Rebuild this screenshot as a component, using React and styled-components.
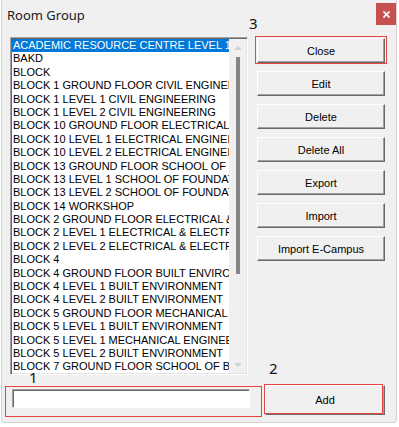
import React, { useState } from 'react';
import styled, { createGlobalStyle } from 'styled-components';

const rooms = [
    'ACADEMIC RESOURCE CENTRE LEVEL 1',
    'BAKD',
    'BLOCK',
    'BLOCK 1 GROUND FLOOR CIVIL ENGINEERING',
    'BLOCK 1 LEVEL 1 CIVIL ENGINEERING',
    'BLOCK 1 LEVEL 2 CIVIL ENGINEERING',
    'BLOCK 10 GROUND FLOOR ELECTRICAL ENGINEERING',
    'BLOCK 10 LEVEL 1 ELECTRICAL ENGINEERING',
    'BLOCK 10 LEVEL 2 ELECTRICAL ENGINEERING',
    'BLOCK 13 GROUND FLOOR SCHOOL OF FOUNDATION',
    'BLOCK 13 LEVEL 1 SCHOOL OF FOUNDATION',
    'BLOCK 13 LEVEL 2 SCHOOL OF FOUNDATION',
    'BLOCK 14 WORKSHOP',
    'BLOCK 2 GROUND FLOOR ELECTRICAL & ELECTRONIC',
    'BLOCK 2 LEVEL 1 ELECTRICAL & ELECTRONIC',
    'BLOCK 2 LEVEL 2 ELECTRICAL & ELECTRONIC',
    'BLOCK 4',
    'BLOCK 4 GROUND FLOOR BUILT ENVIRONMENT',
    'BLOCK 4 LEVEL 1 BUILT ENVIRONMENT',
    'BLOCK 4 LEVEL 2 BUILT ENVIRONMENT',
    'BLOCK 5 GROUND FLOOR MECHANICAL ENGINEERING',
    'BLOCK 5 LEVEL 1 BUILT ENVIRONMENT',
    'BLOCK 5 LEVEL 1 MECHANICAL ENGINEERING',
    'BLOCK 5 LEVEL 2 BUILT ENVIRONMENT',
    'BLOCK 7 GROUND FLOOR SCHOOL OF BUSINESS',
];

const actions = ['Edit', 'Delete', 'Delete All', 'Export', 'Import', 'Import E-Campus'];

function App() {
    const [selected, setSelected] = useState(0);
    const [name, setName] = useState('');

    return (
        <>
            <GlobalStyle />
            <Window>
                <TitleBar>
                    <Title>Room Group</Title>
                    <CloseX aria-label="close">
                        <svg width="7" height="7" viewBox="0 0 7 7">
                            <path d="M0.5 0.5 L6.5 6.5 M6.5 0.5 L0.5 6.5" stroke="#fff" strokeWidth="1.6" />
                        </svg>
                    </CloseX>
                </TitleBar>

                <MainRow>
                    <ListBox>
                        <Rows>
                            {rooms.map((room, i) => (
                                <Row key={room} $active={i === selected} onClick={() => setSelected(i)}>
                                    {room}
                                </Row>
                            ))}
                        </Rows>
                        <ScrollBar>
                            <Arrow $up />
                            <Thumb />
                            <Arrow />
                        </ScrollBar>
                    </ListBox>

                    <ButtonColumn>
                        <Marked $t={-2} $l={-2} $r={-2} $b={-1}>
                            <WinButton>Close</WinButton>
                        </Marked>
                        {actions.map(a => (
                            <WinButton key={a}>{a}</WinButton>
                        ))}
                    </ButtonColumn>
                </MainRow>

                <BottomRow>
                    <Marked $t={-3} $l={-7} $r={-12} $b={-9} className="name-field">
                        <TextBox value={name} onChange={e => setName(e.target.value)} />
                    </Marked>
                    <Marked $t={-1} $l={-1} $r={2} $b={1} className="add-field">
                        <WinButton $tall>Add</WinButton>
                    </Marked>
                </BottomRow>

                <Tag $x={247} $y={13}>3</Tag>
                <Tag $x={27} $y={367}>1</Tag>
                <Tag $x={267} $y={358}>2</Tag>
            </Window>
        </>
    );
}

const GlobalStyle = createGlobalStyle`
    * { box-sizing: border-box; }
    body {
        margin: 0;
        background: #ffffff;
        font-family: "Liberation Sans", Arial, sans-serif;
    }
`;

const Window = styled.div`
    position: relative;
    margin-left: 1px;
    width: 396px;
    height: 423px;
    background: #f0f0f0;
    border: 1px solid #d3d3d3;
    border-top: none;
    border-radius: 0 0 4px 4px;
    display: flex;
    flex-direction: column;
`;

const TitleBar = styled.div`
    height: 37px;
    display: flex;
    align-items: flex-start;
    padding-left: 5px;
`;

const Title = styled.div`
    margin-top: 6px;
    font-family: "Noto Sans", "Open Sans", sans-serif;
    font-size: 13px;
    line-height: 18px;
    color: #1a1a1a;
`;

const CloseX = styled.div`
    margin-left: auto;
    margin-top: 3px;
    width: 20px;
    height: 22px;
    background: #c75050;
    display: flex;
    align-items: center;
    justify-content: center;
`;

const MainRow = styled.div`
    display: flex;
    align-items: flex-start;
    padding-left: 8px;
`;

const ListBox = styled.div`
    width: 238px;
    height: 338px;
    background: #fff;
    border: 1px solid;
    border-color: #a0a0a0 #ffffff #ffffff #a0a0a0;
    box-shadow: inset 1px 1px #696969, inset -1px -1px #e3e3e3;
    padding: 1px;
    display: flex;
`;

const Rows = styled.div`
    flex: 1;
    min-width: 0;
    overflow: hidden;
`;

const Row = styled.div`
    height: 13.4px;
    line-height: 13.4px;
    padding-left: 1px;
    font-size: 11px;
    white-space: nowrap;
    overflow: hidden;
    cursor: default;
    color: ${p => (p.$active ? '#fff' : '#000')};
    background: ${p => (p.$active ? '#0078d7' : 'transparent')};
`;

const ScrollBar = styled.div`
    width: 17px;
    flex: none;
    background: #f0f0f0;
    display: flex;
    flex-direction: column;
    align-items: center;
`;

const Arrow = styled.div`
    width: 0;
    height: 0;
    border-left: 4px solid transparent;
    border-right: 4px solid transparent;
    ${p => (p.$up
        ? 'border-bottom: 4px solid #d0d0d0; margin-top: 7px;'
        : 'border-top: 4px solid #d0d0d0; margin-top: auto; margin-bottom: 6px;')}
`;

const Thumb = styled.div`
    margin-top: 7px;
    width: 4px;
    height: 217px;
    background: #858585;
`;

const ButtonColumn = styled.div`
    margin-left: 9px;
    margin-top: 1px;
    width: 128px;
    display: flex;
    flex-direction: column;
    gap: 8px;
`;

const Marked = styled.div`
    position: relative;
    display: flex;
    &::after {
        content: '';
        position: absolute;
        top: ${p => p.$t}px;
        left: ${p => p.$l}px;
        right: ${p => p.$r}px;
        bottom: ${p => p.$b}px;
        border: 1px solid #e84444;
        pointer-events: none;
    }
    &.name-field {
        margin-top: 4px;
        margin-left: 10px;
    }
    &.add-field {
        margin-left: 15px;
    }
`;

const WinButton = styled.button`
    width: ${p => (p.$tall ? '120px' : '128px')};
    height: ${p => (p.$tall ? '30px' : '25px')};
    padding: 0;
    background: #f0f0f0;
    border: 1px solid;
    border-color: #ffffff #696969 #696969 #ffffff;
    box-shadow: inset -1px -1px #a0a0a0;
    font-family: "Liberation Sans", Arial, sans-serif;
    font-size: 11px;
    color: #000;
    cursor: pointer;
`;

const BottomRow = styled.div`
    display: flex;
    align-items: flex-start;
    margin-top: 10px;
`;

const TextBox = styled.input`
    width: 238px;
    height: 19px;
    background: #fff;
    border: 1px solid;
    border-color: #a0a0a0 #ffffff #ffffff #a0a0a0;
    box-shadow: inset 1px 1px #696969;
    padding: 0 3px;
    font-family: "Liberation Sans", Arial, sans-serif;
    font-size: 11px;
    outline: none;
`;

const Tag = styled.span`
    position: absolute;
    left: ${p => p.$x}px;
    top: ${p => p.$y}px;
    font-family: "Noto Sans", "Open Sans", sans-serif;
    font-size: 15px;
    line-height: 20px;
    color: #111;
`;

export default App;
